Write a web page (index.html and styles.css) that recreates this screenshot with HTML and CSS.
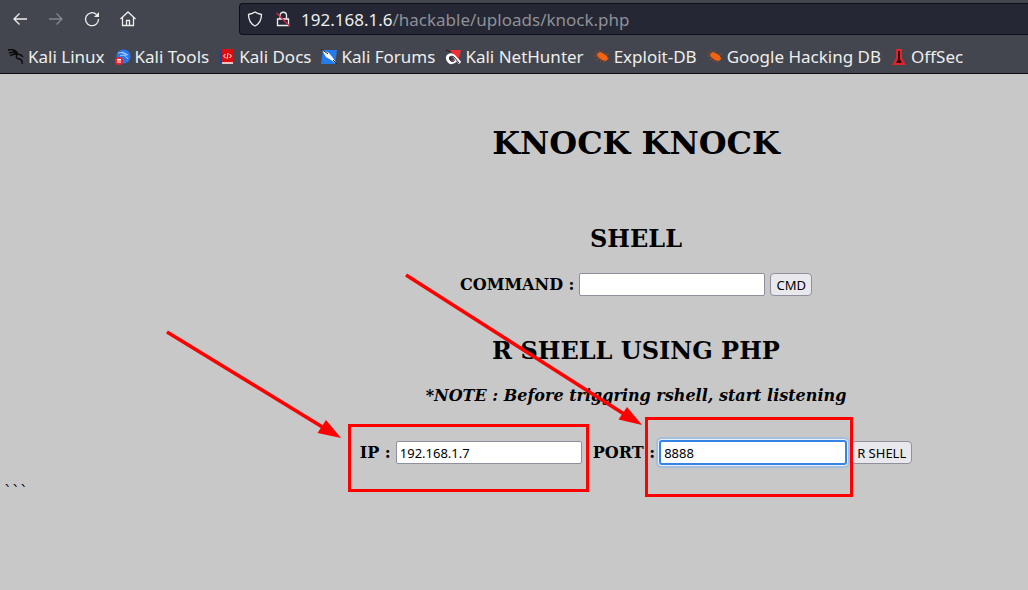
FILE: index.html
```html
<!DOCTYPE html>
<html lang="en">
<head>
    <meta charset="UTF-8">
    <meta name="viewport" content="width=device-width, initial-scale=1.0">
    <title>Knock Knock</title>
    <link rel="stylesheet" href="styles.css">
</head>
<body>

<!-- Shared bookmark icons -->
<svg class="sprite" aria-hidden="true">
    <symbol id="bug" viewBox="0 0 16 16">
        <path d="M1 3l4 3M4 1l3 4M0 7l4 0M8 2l0 3M11 4l0 2M2 11l4-2M6 13l2-3M10 14l0-3M12 6l3-1M13 9l2 1" stroke="#a8491c" stroke-width=".8" fill="none"/>
        <path d="M3 5l3-2 4 2 3 2 1 3-2 2-4-1-4-3z" fill="#f26411"/>
    </symbol>
    <symbol id="dragon" viewBox="0 0 16 16">
        <path d="M0 1c4-1 8 0 10 4M1 4c3-1 6-1 8 1M3 0l6 4M2 7c2-2 5-2 7-2M9 5l4 1 2 2M9 6c-2 3 1 4 3 4 2 1 3 2 2 5" stroke="currentColor" stroke-width="1.4" fill="none"/>
    </symbol>
</svg>

<!-- Browser bar -->
<header class="browser">
    <div class="toolbar">
        <nav class="nav-buttons">
            <button aria-label="Back"><svg viewBox="0 0 16 16"><path d="M15 8H2M7.500 2.500L2 8l5.500 5.500"/></svg></button>
            <button aria-label="Forward" disabled><svg viewBox="0 0 16 16"><path d="M1 8h13M8.500 2.500L14 8l-5.500 5.500"/></svg></button>
            <button aria-label="Reload"><svg viewBox="0 0 16 16"><path d="M12.500 3.500A6.500 6.500 0 1 0 14.500 8"/><path d="M15 1v5h-5z" fill="currentColor" stroke="none"/></svg></button>
            <button aria-label="Home"><svg viewBox="0 0 16 16"><path d="M.5 8L8 1l7.500 7M2.500 6.500V14.500h11V6.500M6.500 14V9.500h3V14"/></svg></button>
        </nav>
        <div class="address">
            <svg viewBox="0 0 16 16"><path d="M8 1C6 2.500 4 3 1.500 3.500c0 5 1.500 9 6.500 11.500 5-2.500 6.500-6.500 6.500-11.500C12 3 10 2.500 8 1z"/></svg>
            <svg viewBox="0 0 16 16"><path d="M2.500 8h11v6.500h-11zM5 8V4.500a3 3 0 0 1 6.500 0V8"/><path d="M1.500 2l13 13" stroke="#e22850"/></svg>
            <span class="url">192.168.1.6<span class="path">/hackable/uploads/knock.php</span></span>
        </div>
    </div>
    <nav class="bookmarks">
        <a href="#"><svg class="black"><use href="#dragon"/></svg>Kali Linux</a>
        <a href="#"><svg viewBox="0 0 16 16"><circle cx="8.500" cy="7.500" r="7" fill="#2776ea"/><path d="M3 4c4-1 7 0 8 3M5 7c3-2 6 0 8 3M7 3l6 3" stroke="#b9d5ff" fill="none"/><circle cx="4" cy="12" r="4" fill="#e8232a"/><path d="M2 10.500h4M3 11v3M5 11v3" stroke="#fff" fill="none"/></svg>Kali Tools</a>
        <a href="#"><svg viewBox="0 0 16 16"><path d="M1 1h2v14H1z" fill="#174591"/><path d="M3 0h11v13H3z" fill="#dd0d10"/><path d="M3 13h11v2H3z" fill="#e9c4c4"/><path d="M6.500 5l-2 2 2 2M10.500 5l2 2-2 2M9 4L8 10" stroke="#fff" fill="none"/></svg>Kali Docs</a>
        <a href="#"><svg viewBox="0 0 16 16"><path d="M2 1h14l-2 14H0z" fill="#237ce9"/><path d="M1 1l7 3 4 5 4 6-6-4-5-3z" fill="#fff"/><path d="M0 0l7 5M12 11l4 4" stroke="#222" fill="none"/></svg>Kali Forums</a>
        <a href="#"><svg viewBox="0 0 16 16"><path d="M5 1h11l-3 12z" fill="#f22d39"/><path d="M15 14L9 7C5 4 1 7 3 11c2 4 6 3 8 0" stroke="#fff" stroke-width="3" fill="none"/><path d="M14 14L9 8C6 6 4 8 5 11c1 2 4 2 5 0M1 1l5 2" stroke="#35171e" fill="none"/></svg>Kali NetHunter</a>
        <a href="#"><svg><use href="#bug"/></svg>Exploit-DB</a>
        <a href="#"><svg><use href="#bug"/></svg>Google Hacking DB</a>
        <a href="#"><svg viewBox="0 0 16 16"><path d="M5 0h6v9l4 7H1l4-7z" fill="#df242b"/><path d="M7 2h2v8l2 4H5l2-4z" fill="#35080c"/></svg>OffSec</a>
    </nav>
</header>

<main>
    <div class="panel">
        <h1>KNOCK KNOCK</h1>

        <h2>SHELL</h2>
        <form class="row">
            <label for="command">COMMAND :</label>
            <input type="text" id="command">
            <button type="button">CMD</button>
        </form>

        <h2>R SHELL USING PHP</h2>
        <p class="note">*NOTE : Before triggring rshell, start listening</p>
        <form class="row">
            <label for="ip">IP :</label>
            <input type="text" id="ip" value="192.168.1.7">
            <label for="port" class="port-label">PORT :</label>
            <input type="text" id="port" class="active" value="8888">
            <button type="button">R SHELL</button>
        </form>
    </div>
    <p class="ticks">```</p>
</main>

<!-- Arrows and boxes over the fields -->
<svg class="marks" width="1028" height="590" aria-hidden="true">
    <g fill="none" stroke="#f00" stroke-width="3">
        <rect x="349.500" y="425.500" width="238" height="65"/>
        <rect x="646.500" y="418.500" width="205" height="77"/>
        <path d="M167 332L324 428M406 275L624 414" stroke-width="3.600"/>
    </g>
    <path d="M341 438l-23.500-5 8.500-13zM642 425l-23.500-5.500 8.500-12.500z" fill="#f00"/>
</svg>

</body>
</html>
```
FILE: styles.css
```css
* {
    box-sizing: border-box;
}

body {
    margin: 0;
    min-height: 100vh;
    background-color: #c8c8c8;
    color: #000;
    font-family: "DejaVu Serif", serif;
    font-size: 16px;
    overflow-x: hidden;
}

.sprite {
    position: absolute;
    width: 0;
    height: 0;
}

.browser {
    background-color: #43464e;
    border-bottom: 1px solid #0c0c0d;
    color: #eeeeec;
    font-family: "Noto Sans", sans-serif;
}

.browser svg {
    width: 16px;
    height: 16px;
    flex: none;
}

.toolbar {
    display: flex;
    align-items: center;
    gap: 103px;
    height: 38px;
    padding-left: 12px;
}

.nav-buttons {
    display: flex;
    gap: 20px;
}

.nav-buttons button {
    display: flex;
    padding: 0;
    border: none;
    background: none;
    color: inherit;
}

.nav-buttons button:disabled {
    color: #85878c;
}

.toolbar svg {
    fill: none;
    stroke: currentColor;
    stroke-width: 1.3;
}

.address {
    flex: 1;
    display: flex;
    align-items: center;
    gap: 12px;
    height: 32px;
    padding-left: 7px;
    background-color: #252834;
    border: 1px solid #0e1016;
    border-right: none;
    border-radius: 4px 0 0 4px;
}

.url {
    margin-left: -2px;
    font-size: 17px;
    white-space: nowrap;
}

.path {
    color: #8f9096;
}

.bookmarks {
    display: flex;
    gap: 10px;
    height: 35px;
    padding: 2px 0 0 8px;
    font-size: 17px;
}

.bookmarks a {
    display: flex;
    align-items: center;
    gap: 4px;
    color: inherit;
    text-decoration: none;
    white-space: nowrap;
}

.black {
    color: #0b0b0c;
}

main {
    padding-top: 51px;
}

.panel {
    margin-left: 244px;
    text-align: center;
}

h1 {
    margin: 0 0 64px;
    font-size: 32px;
    line-height: 36px;
}

h2 {
    margin: 0 0 20px;
    font-size: 24px;
    line-height: 28px;
}

.row {
    display: flex;
    justify-content: center;
    align-items: center;
    gap: 5px;
    margin-bottom: 41px;
    font-weight: bold;
}

.row input,
.row button {
    height: 23px;
    border: 1px solid #8f8f9d;
    color: #000;
    font-family: "Noto Sans", sans-serif;
    font-size: 13px;
}

.row input {
    width: 186px;
    padding: 1px 3px;
    border-radius: 2px;
    background-color: #fff;
}

.row button {
    padding: 0 5px;
    border-radius: 4px;
    background-color: #e9e9ed;
}

.row input.active {
    border-color: #3584e4;
    box-shadow: 0 0 0 1px #3584e4, 0 0 0 2px #e8f0f8, 0 0 0 4px #a4c0dc;
}

.port-label {
    margin-left: 6px;
}

.note {
    margin: 22px 0 36px;
    font-style: italic;
    font-weight: bold;
    line-height: 18px;
}

.ticks {
    margin: -23px 0 0 4px;
    line-height: 20px;
}

.marks {
    position: absolute;
    top: 0;
    left: 0;
    pointer-events: none;
}
```
